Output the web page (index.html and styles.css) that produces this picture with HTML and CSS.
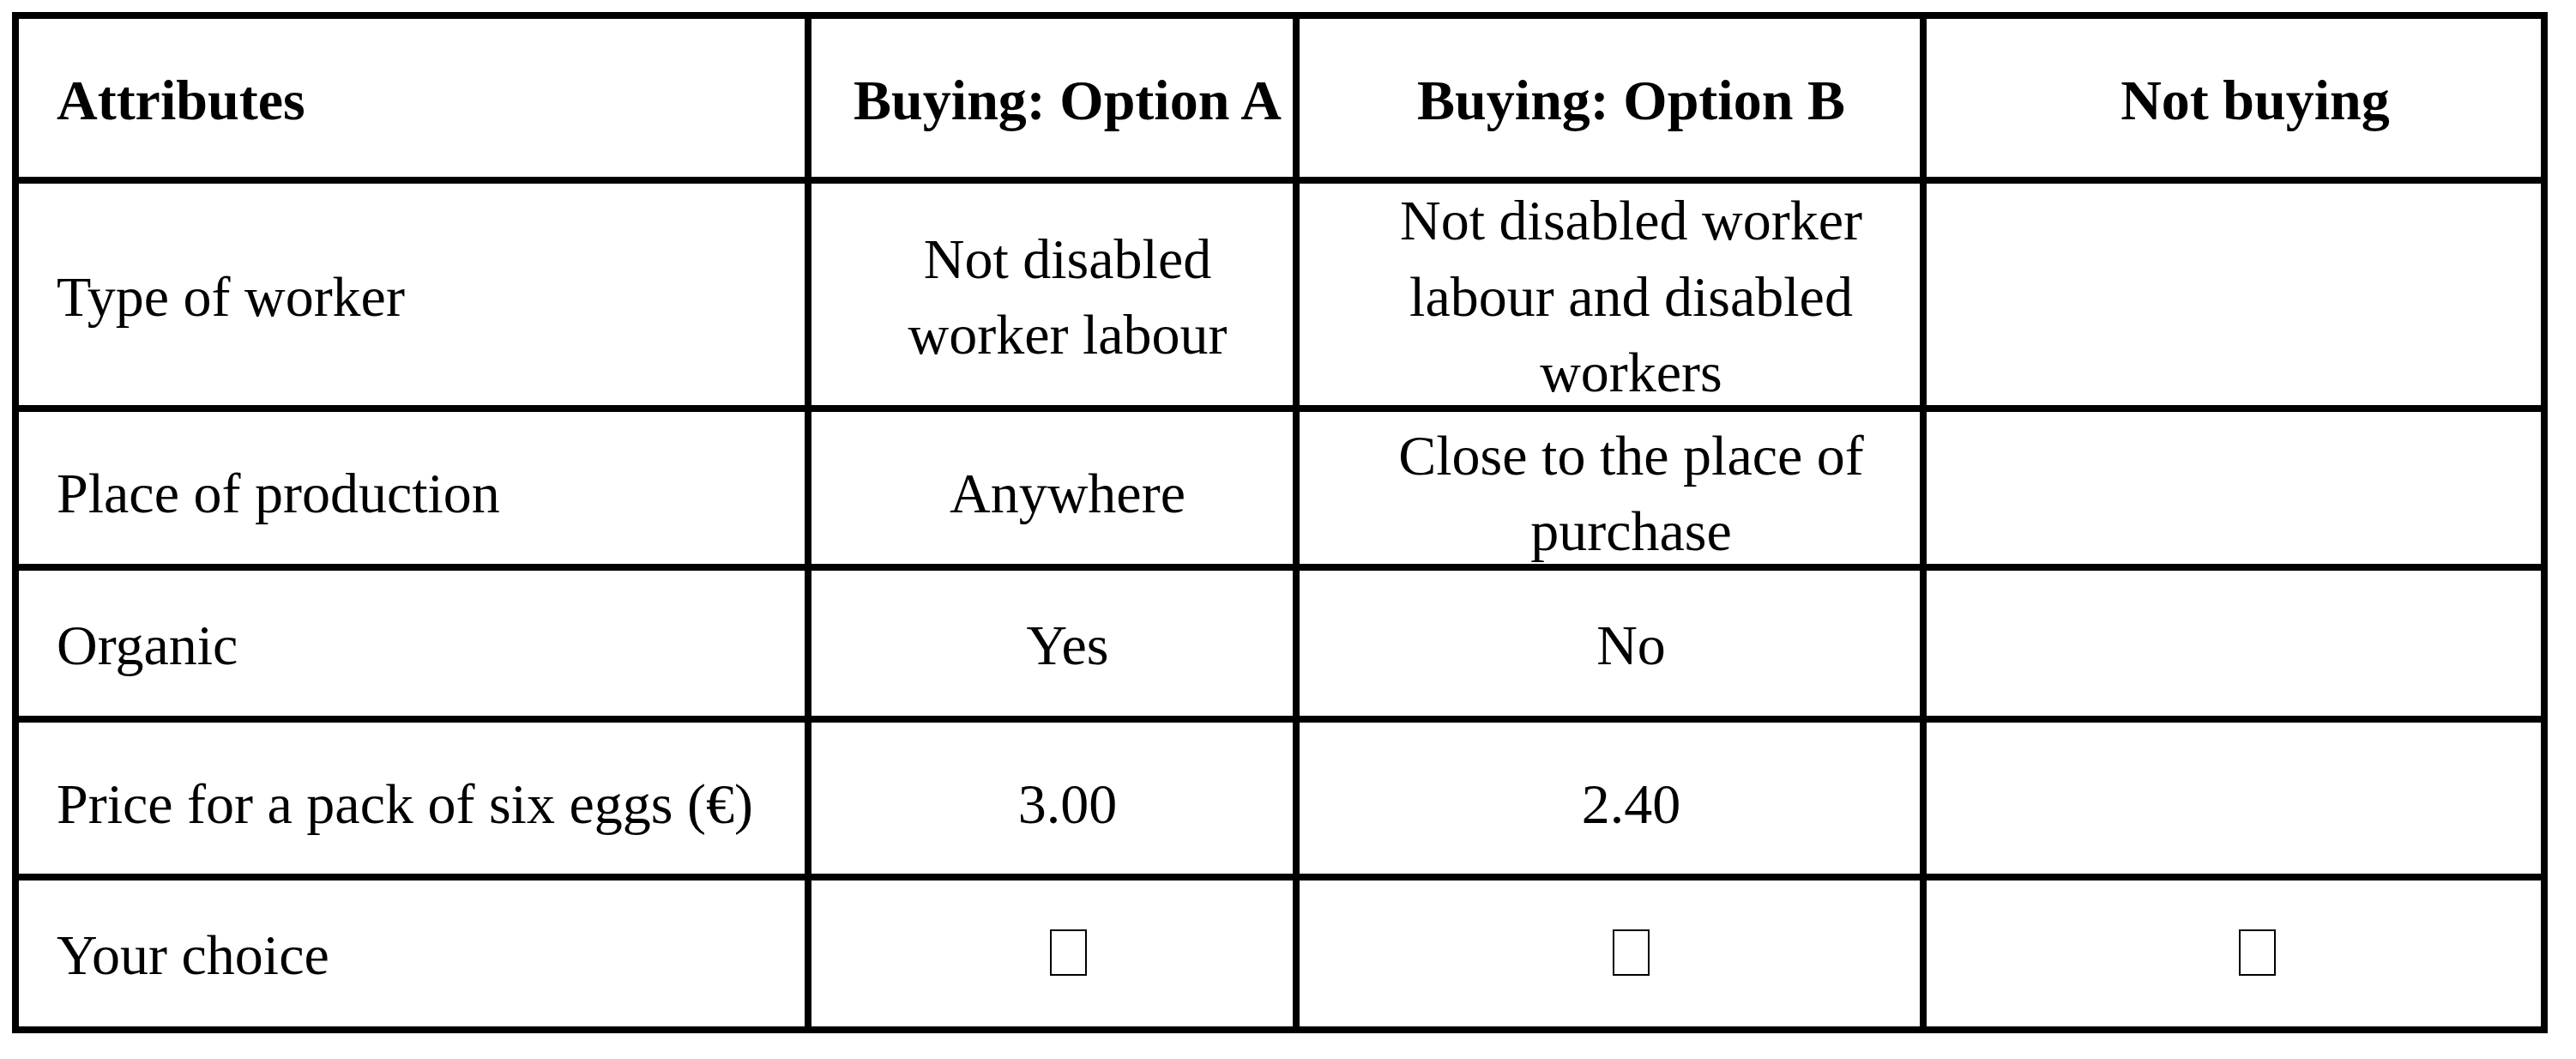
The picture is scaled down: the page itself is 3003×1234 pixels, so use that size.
FILE: index.html
```html
<!DOCTYPE html>
<html lang="en">
<head>
<meta charset="utf-8">
<title>Choice card</title>
<link rel="stylesheet" href="styles.css">
</head>
<body>
<div class="sheet">
  <div class="grid" role="table" aria-label="Choice set">
    <div class="cell c0 r0 hd" role="columnheader">Attributes</div>
    <div class="cell ca r0 hd" role="columnheader">Buying: Option A</div>
    <div class="cell cb r0 hd" role="columnheader">Buying: Option B</div>
    <div class="cell cc r0 hd" role="columnheader">Not buying</div>

    <div class="cell c0 r1" role="rowheader">Type of worker</div>
    <div class="cell ca r1" role="cell">Not disabled worker labour</div>
    <div class="cell cb r1" role="cell">Not disabled worker labour and disabled workers</div>
    <div class="cell cc r1" role="cell"></div>

    <div class="cell c0 r2" role="rowheader">Place of production</div>
    <div class="cell ca r2" role="cell">Anywhere</div>
    <div class="cell cb r2" role="cell">Close to the place of purchase</div>
    <div class="cell cc r2" role="cell"></div>

    <div class="cell c0 r3" role="rowheader">Organic</div>
    <div class="cell ca r3" role="cell">Yes</div>
    <div class="cell cb r3" role="cell">No</div>
    <div class="cell cc r3" role="cell"></div>

    <div class="cell c0 r4" role="rowheader">Price for a pack of six eggs (€)</div>
    <div class="cell ca r4" role="cell">3.00</div>
    <div class="cell cb r4" role="cell">2.40</div>
    <div class="cell cc r4" role="cell"></div>

    <div class="cell c0 r5" role="rowheader">Your choice</div>
    <div class="cell ca r5" role="cell"><span class="box" role="checkbox" aria-checked="false" aria-label="Option A"></span></div>
    <div class="cell cb r5" role="cell"><span class="box" role="checkbox" aria-checked="false" aria-label="Option B"></span></div>
    <div class="cell cc r5" role="cell"><span class="box" role="checkbox" aria-checked="false" aria-label="Not buying"></span></div>
  </div>
</div>
</body>
</html>
```

FILE: styles.css
```css
html, body {
  margin: 0;
  padding: 0;
  background: #ffffff;
}

.sheet {
  padding: 14px;
}

.grid {
  display: grid;
  width: max-content;
  grid-template-columns: 916px 561px 723px 716px;
  grid-template-rows: 184px 258px 177px 169px 176px 170px;
  gap: 8px;
  padding: 8px;
  background: #000000;
}

.cell {
  display: flex;
  align-items: center;
  background: #ffffff;
  color: #000000;
  font-family: "Liberation Serif", "Times New Roman", serif;
  font-size: 66px;
  line-height: 88.4px;
  box-sizing: border-box;
  min-width: 0;
}

.hd {
  font-weight: 700;
}

.c0 {
  justify-content: flex-start;
  padding-left: 44px;
}

.ca,
.cb,
.cc {
  justify-content: center;
  text-align: center;
}

.ca {
  padding-left: 44px;
  padding-right: 8px;
}

.cb {
  padding-left: 60px;
  padding-right: 10px;
}

.cc {
  padding-left: 60px;
  padding-right: 10px;
}

.r0 { padding-top: 7px; }
.r1 { padding-top: 6px; }
.r2 { padding-top: 13px; }
.r3 { padding-top: 6px; }
.r4 { padding-top: 15px; }
.r5 { padding-top: 5px; }

.box {
  display: block;
  width: 43px;
  height: 54px;
  box-sizing: border-box;
  border: 2px solid #000000;
  margin-top: -8px;
}

.ca .box {
  margin-left: 2px;
}

.cc .box {
  margin-left: 4px;
}
```
